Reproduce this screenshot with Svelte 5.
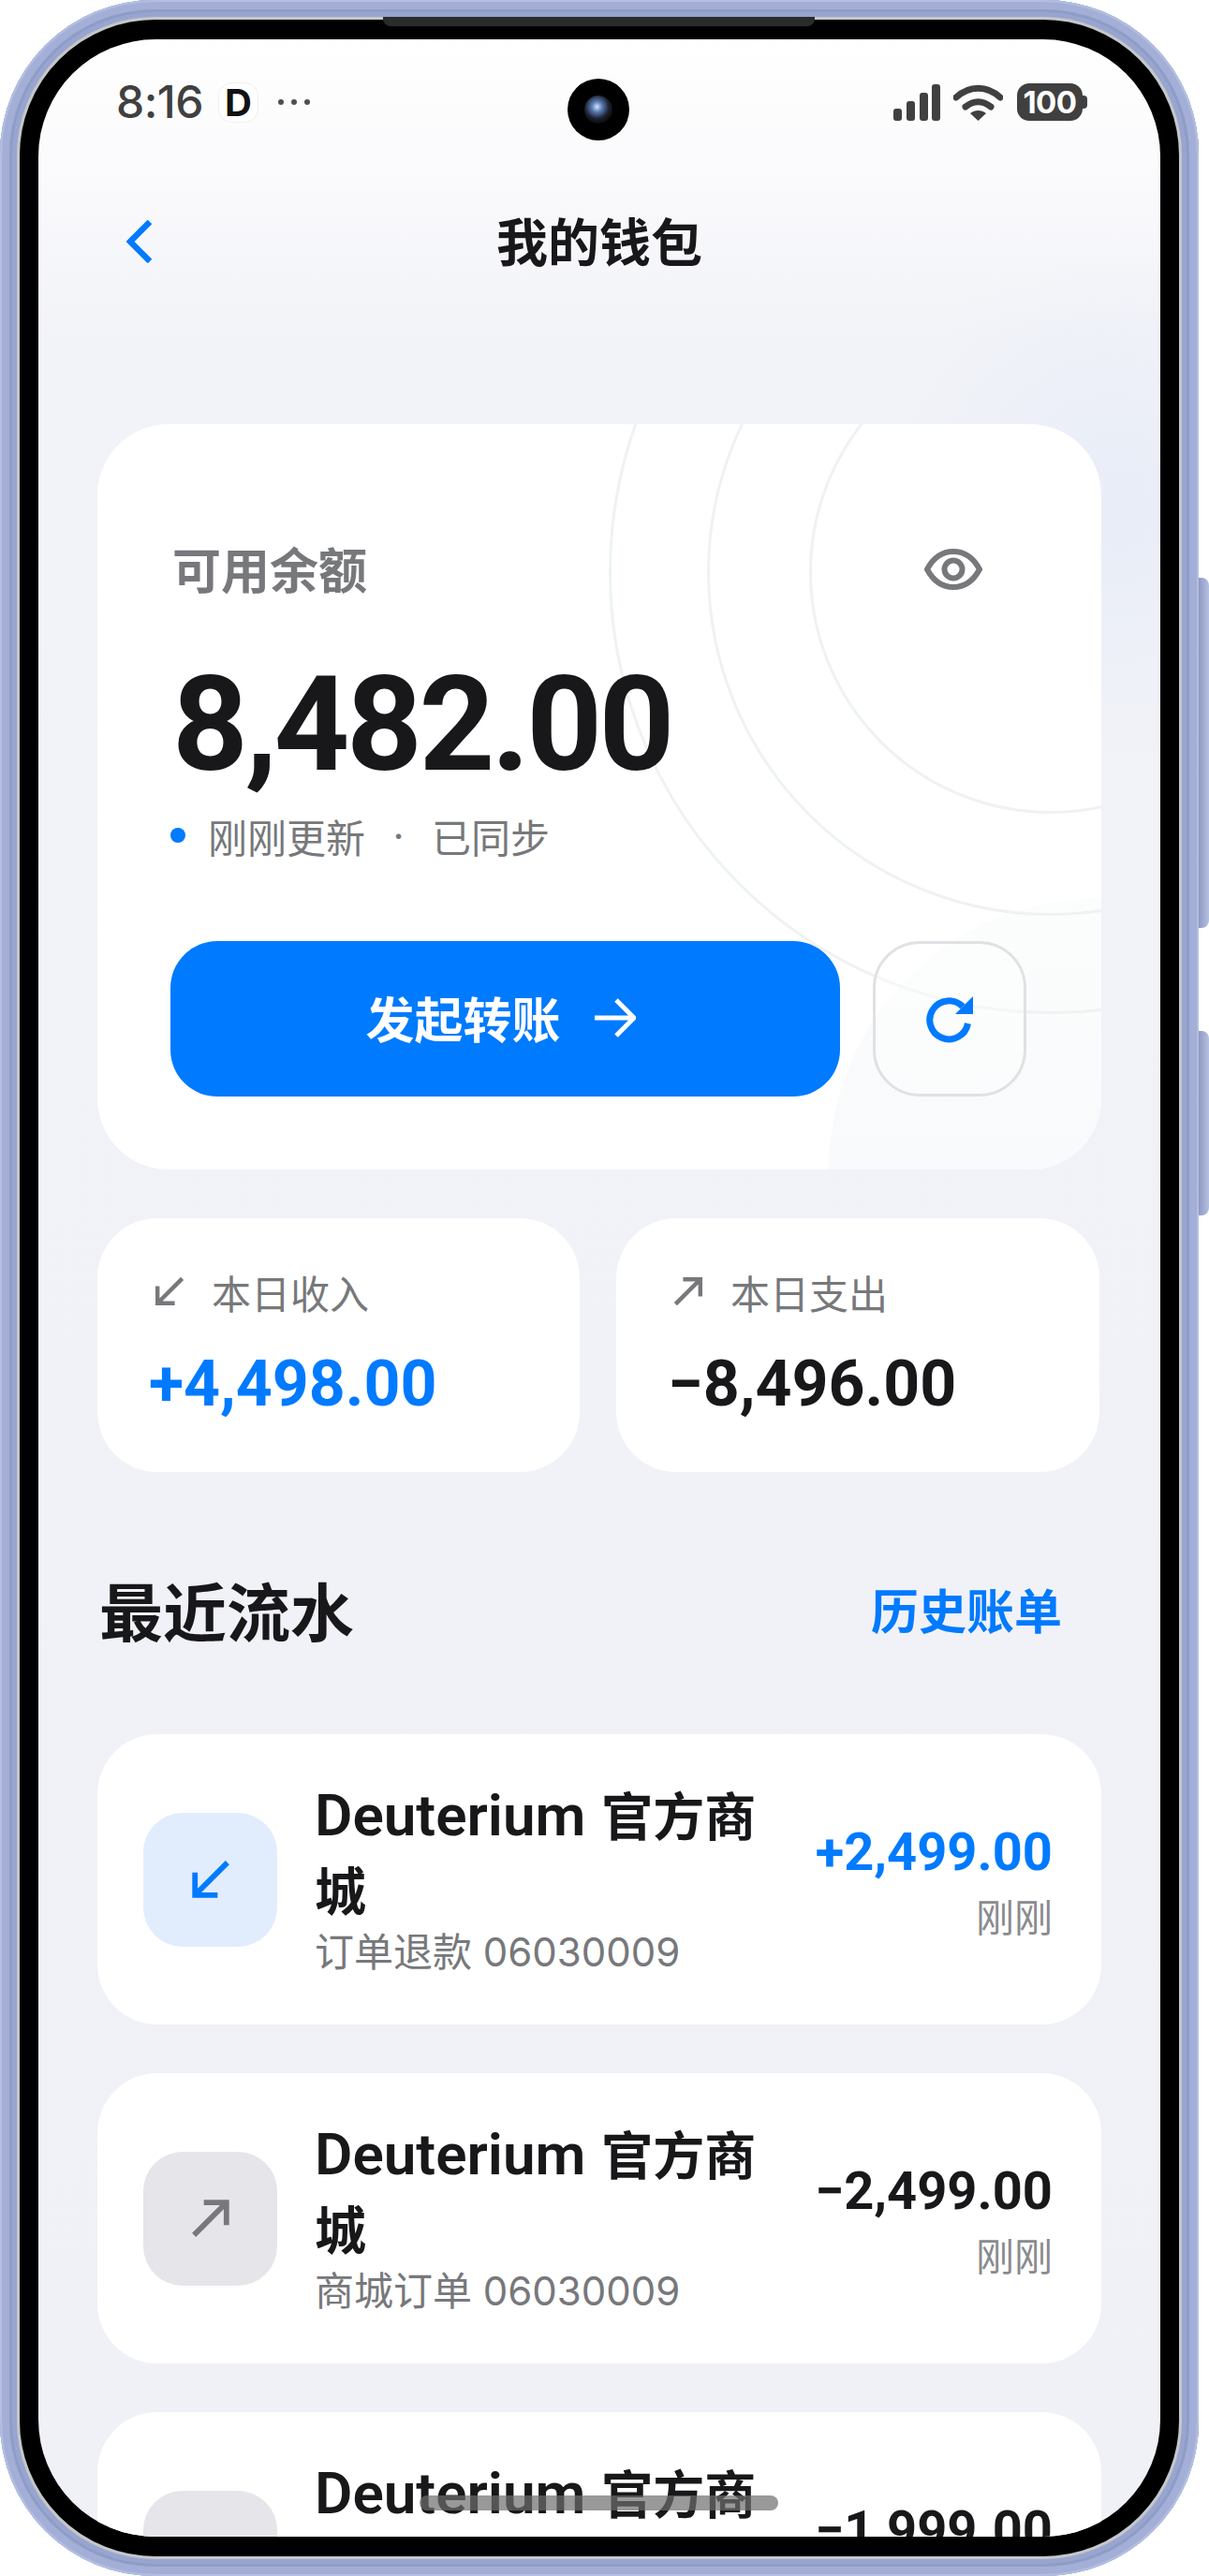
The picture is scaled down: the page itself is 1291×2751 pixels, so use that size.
<script>
  const rows = [
    { sub: '订单退款 06030009', amount: '+2,499.00', dir: 'in' },
    { sub: '商城订单 06030009', amount: '−2,499.00', dir: 'out' },
    { sub: '商城订单 06030008', amount: '−1,999.00', dir: 'out' }
  ];
</script>

{#snippet arrow(dir)}
  <svg class="arrow" viewBox="0 0 40 40" fill="none" stroke="currentColor" stroke-width="5.5">
    {#if dir === 'in'}
      <path d="M37 3 4 36M4 13v23h23" />
    {:else}
      <path d="M3 37 36 4M13 4h23v23" />
    {/if}
  </svg>
{/snippet}

<div class="phone">
  <i class="side-btn power"></i>
  <i class="side-btn volume"></i>

  <div class="bezel">
    <div class="speaker"></div>

    <div class="screen">
      <div class="status">
        <div class="status-left">
          <span class="time">8:16</span>
          <span class="app-badge">D</span>
          <span class="more"><i></i><i></i><i></i></span>
        </div>
        <div class="camera"><i></i></div>
        <div class="status-right">
          <svg width="50" height="39" viewBox="0 0 50 39" fill="#404040">
            <rect x="0" y="26" width="9" height="13" rx="3" />
            <rect x="14" y="18" width="9" height="21" rx="3" />
            <rect x="28" y="9" width="9" height="30" rx="3" />
            <rect x="41" y="0" width="9" height="39" rx="3" />
          </svg>
          <svg width="53" height="39" viewBox="0 0 53 39" fill="none" stroke="#404040" stroke-width="7">
            <path d="M3 14C17 1 36 1 50 14" stroke-linecap="round" />
            <path d="M13 24c9-7 18-7 27 0" stroke-linecap="round" />
            <path d="M18 31c5-4 12-4 17 0l-8.500 8z" fill="#404040" stroke="none" />
          </svg>
          <div class="battery"><span>100</span></div>
        </div>
      </div>

      <header class="nav">
        <svg class="back" width="28" height="46" viewBox="0 0 28 46" fill="none" stroke="#007aff" stroke-width="6.500">
          <path d="M25 2 4 23l21 21" />
        </svg>
        <h1>我的钱包</h1>
      </header>

      <main>
        <section class="balance">
          <div class="deco">
            <i class="blob"></i>
            <i class="ring r1"></i>
            <i class="ring r2"></i>
            <i class="ring r3"></i>
          </div>

          <div class="balance-head">
            <span>可用余额</span>
            <svg width="62" height="44" viewBox="0 0 62 44" fill="none" stroke="#77787b" stroke-width="6">
              <path d="M3 22C10 9 20 3 31 3s21 6 28 19c-7 13-17 19-28 19S10 35 3 22Z" />
              <circle cx="31" cy="22" r="9.500" />
            </svg>
          </div>
          <div class="balance-num">8,482.00</div>
          <div class="meta">
            <i class="dot"></i>
            <span>刚刚更新</span>
            <span class="sep">·</span>
            <span>已同步</span>
          </div>
          <div class="actions">
            <button class="primary">
              发起转账
              <svg width="44" height="42" viewBox="0 0 44 42" fill="none" stroke="#fff" stroke-width="5">
                <path d="M0 21h41M23 2l19 19-19 19" />
              </svg>
            </button>
            <button class="refresh" aria-label="刷新">
              <svg width="50" height="51" viewBox="0 0 50 51" fill="none">
                <path d="M39 12A20.500 20.500 0 1 0 44.500 30" stroke="#007aff" stroke-width="7" />
                <path d="M50 1v19H31z" fill="#007aff" />
              </svg>
            </button>
          </div>
        </section>

        <section class="summary">
          <div class="tile">
            <div class="tile-label">{@render arrow('in')}本日收入</div>
            <div class="tile-num blue">+4,498.00</div>
          </div>
          <div class="tile">
            <div class="tile-label">{@render arrow('out')}本日支出</div>
            <div class="tile-num">−8,496.00</div>
          </div>
        </section>

        <div class="section-head">
          <h2>最近流水</h2>
          <span>历史账单</span>
        </div>

        <div class="list">
          {#each rows as row}
            <div class="row">
              <div class="row-icon" class:in={row.dir === 'in'}>{@render arrow(row.dir)}</div>
              <div class="row-text">
                <div class="row-title"><span class="latin">Deuterium</span> 官方商城</div>
                <div class="row-sub">{row.sub}</div>
              </div>
              <div class="row-right">
                <div class="row-num" class:blue={row.dir === 'in'}>{row.amount}</div>
                <div class="row-time">刚刚</div>
              </div>
            </div>
          {/each}
        </div>
      </main>

      <div class="home-bar"></div>
    </div>
  </div>
</div>

<style>
  :global(body) {
    background: #fff;
  }

  .phone {
    position: relative;
    box-sizing: border-box;
    width: 1280px;
    height: 2751px;
    padding: 18px;
    border-radius: 165px;
    background: #a3afd6;
    box-shadow: inset 0 0 0 2px #b4bfe0, inset 0 0 0 10px #a3afd6, inset 0 0 0 13px #8f9cc8, inset 0 0 0 18px #98a5cf;
    font-family: Inter, "Noto Sans CJK SC", sans-serif;
    color: #18181a;
  }

  .side-btn {
    position: absolute;
    left: 1280px;
    width: 11px;
    border-radius: 0 8px 8px 0;
    background: linear-gradient(90deg, #8e9ac4, #b5bfdf);
  }

  .power {
    top: 617px;
    height: 374px;
  }

  .volume {
    top: 1101px;
    height: 197px;
  }

  .bezel {
    position: relative;
    box-sizing: border-box;
    height: 100%;
    padding: 21px 20px;
    border: 3px solid #c6c7c9;
    border-radius: 148px;
    background: #000;
  }

  .speaker {
    position: absolute;
    top: -3px;
    left: 388px;
    width: 461px;
    height: 10px;
    border-radius: 0 0 8px 8px;
    background: #2b2b2b;
  }

  .screen {
    position: relative;
    height: 100%;
    overflow: hidden;
    border-radius: 125px;
    background:
      radial-gradient(260px 280px at 1150px 500px, #e8edf8, rgba(232, 237, 248, 0)),
      linear-gradient(180deg, #fff 0, #fbfbfd 120px, #f2f3f8 320px, #f0f1f6 100%);
  }

  .status {
    position: relative;
    display: flex;
    justify-content: space-between;
    align-items: center;
    height: 134px;
    padding: 0 78px 0 83px;
    color: #404040;
  }

  .status-left {
    display: flex;
    align-items: center;
  }

  .time {
    width: 110px;
    font-size: 48px;
    font-weight: 500;
    line-height: 1;
    letter-spacing: -0.5px;
  }

  .app-badge {
    display: flex;
    justify-content: center;
    align-items: center;
    width: 41px;
    height: 41px;
    border-radius: 14px;
    background: #fff;
    box-shadow: 0 0 0 1px #f0f0f0;
    color: #111;
    font-size: 40px;
    font-weight: 700;
  }

  .more {
    display: flex;
    gap: 8px;
    margin-left: 22px;
  }

  .more i {
    width: 6px;
    height: 6px;
    border-radius: 50%;
    background: #505050;
  }

  .camera {
    position: absolute;
    top: 42px;
    left: 565px;
    display: flex;
    justify-content: center;
    align-items: center;
    width: 66px;
    height: 66px;
    border-radius: 50%;
    background: #000;
  }

  .camera i {
    width: 30px;
    height: 30px;
    border-radius: 50%;
    background: radial-gradient(circle at 45% 40%, #d9e6f5 0, #5d7fb8 22%, #1c2230 52%, #090a0d 75%);
  }

  .status-right {
    display: flex;
    align-items: center;
    gap: 14px;
  }

  .battery {
    position: relative;
    display: flex;
    justify-content: center;
    align-items: center;
    width: 70px;
    height: 40px;
    margin-left: 1px;
    margin-right: 5px;
    border-radius: 13px;
    background: #404040;
    color: #fff;
    font-size: 33px;
    font-weight: 700;
    letter-spacing: -0.5px;
  }

  .battery::after {
    content: '';
    position: absolute;
    top: 13px;
    left: 70px;
    width: 5px;
    height: 14px;
    border-radius: 0 4px 4px 0;
    background: #404040;
  }

  .nav {
    display: flex;
    justify-content: center;
    align-items: center;
    position: relative;
    height: 164px;
  }

  .back {
    position: absolute;
    left: 94px;
    top: 59px;
  }

  h1 {
    margin: 2px 0 0;
    font-size: 55px;
    font-weight: 700;
    line-height: 1;
  }

  main {
    padding: 113px 63px 0;
  }

  .balance {
    position: relative;
    height: 796px;
    box-sizing: border-box;
    padding: 118px 78px 78px;
    overflow: hidden;
    border-radius: 76px;
    background: #fff;
  }

  .deco {
    position: absolute;
    inset: 0;
  }

  .blob {
    position: absolute;
    left: 781px;
    top: 506px;
    width: 580px;
    height: 580px;
    border-radius: 50%;
    background: linear-gradient(180deg, #fcfdfd 0, #f8fafb 45%);
  }

  .ring {
    position: absolute;
    box-sizing: border-box;
    border: 3px solid #eef3f2;
    border-radius: 50%;
  }

  .r1 {
    left: 760px;
    top: -100px;
    width: 516px;
    height: 516px;
  }

  .r2 {
    left: 651px;
    top: -209px;
    width: 734px;
    height: 734px;
  }

  .r3 {
    left: 546px;
    top: -314px;
    width: 944px;
    height: 944px;
  }

  .balance-head,
  .balance-num,
  .meta,
  .actions {
    position: relative;
  }

  .balance-head {
    display: flex;
    justify-content: space-between;
    align-items: center;
    height: 70px;
    padding-right: 49px;
    padding-left: 2px;
    color: #77787b;
    font-size: 52px;
    font-weight: 700;
  }

  .balance-head svg {
    margin-top: 3px;
  }

  .balance-num {
    margin-top: 53px;
    margin-left: 2px;
    font-family: Roboto, sans-serif;
    font-size: 141px;
    font-weight: 700;
    line-height: 160px;
    letter-spacing: -3.5px;
  }

  .meta {
    display: flex;
    align-items: center;
    height: 50px;
    margin-top: 13px;
    color: #77787b;
    font-size: 42px;
  }

  .dot {
    width: 16px;
    height: 16px;
    margin-right: 24px;
    border-radius: 50%;
    background: #007aff;
  }

  .sep {
    width: 71px;
    text-align: center;
  }

  .actions {
    display: flex;
    gap: 35px;
    margin-top: 88px;
  }

  button {
    display: flex;
    justify-content: center;
    align-items: center;
    box-sizing: border-box;
    height: 166px;
    padding: 0;
    border-radius: 50px;
    font: inherit;
  }

  .primary {
    gap: 36px;
    width: 715px;
    padding-right: 10px;
    padding-bottom: 3px;
    border: 0;
    background: #007aff;
    color: #fff;
    font-size: 52px;
    font-weight: 700;
  }

  .refresh {
    width: 164px;
    border: 3px solid #dfe1e4;
    background: rgba(255, 255, 255, 0.35);
  }

  .summary {
    display: grid;
    grid-template-columns: 515px 516px;
    gap: 39px;
    margin-top: 52px;
  }

  .tile {
    box-sizing: border-box;
    height: 271px;
    padding: 53px 55px 0;
    border-radius: 64px;
    background: #fff;
  }

  .tile-label {
    display: flex;
    align-items: center;
    gap: 29px;
    height: 50px;
    padding-left: 6px;
    color: #77787b;
    font-size: 42px;
  }

  .arrow {
    width: 32px;
    height: 32px;
  }

  .tile-num {
    margin-top: 34px;
    font-family: Roboto, sans-serif;
    font-size: 68px;
    font-weight: 700;
    line-height: 80px;
  }

  .blue {
    color: #007aff;
  }

  .section-head {
    display: flex;
    justify-content: space-between;
    align-items: center;
    height: 100px;
    margin: 96px 0 84px;
    padding: 0 42px 0 2px;
  }

  h2 {
    margin: 0;
    font-size: 68px;
    font-weight: 700;
  }

  .section-head span {
    color: #007aff;
    font-size: 51px;
    font-weight: 700;
  }

  .list {
    display: flex;
    flex-direction: column;
    gap: 52px;
  }

  .row {
    display: flex;
    align-items: center;
    box-sizing: border-box;
    height: 310px;
    padding: 0 52px 0 49px;
    border-radius: 64px;
    background: #fff;
  }

  .row-icon {
    display: flex;
    flex: none;
    justify-content: center;
    align-items: center;
    width: 143px;
    height: 143px;
    border-radius: 42px;
    background: #e5e5ea;
    color: #77787b;
  }

  .row-icon.in {
    background: #e1edfd;
    color: #007aff;
  }

  .row-icon .arrow {
    width: 42px;
    height: 42px;
  }

  .row-text {
    width: 490px;
    margin-left: 40px;
  }

  .row-title {
    margin-top: -4px;
    font-size: 55px;
    font-weight: 600;
    line-height: 80px;
  }

  .latin {
    margin-right: 3px;
    font-family: Roboto, sans-serif;
    font-size: 62px;
    font-weight: 600;
    line-height: 1;
  }

  .row-sub {
    color: #77787b;
    font-size: 42px;
    line-height: 50px;
  }

  .row-right {
    flex: 1;
    min-width: 0;
    text-align: right;
  }

  .row-num {
    margin-top: 2px;
    font-family: Roboto, sans-serif;
    font-size: 56px;
    font-weight: 700;
    line-height: 70px;
  }

  .row-time {
    margin-top: 10px;
    color: #8a8b8e;
    font-size: 41px;
    line-height: 50px;
  }

  .home-bar {
    position: absolute;
    left: 407px;
    bottom: 28px;
    width: 383px;
    height: 16px;
    border-radius: 8px;
    background: rgba(110, 110, 110, 0.7);
  }
</style>
